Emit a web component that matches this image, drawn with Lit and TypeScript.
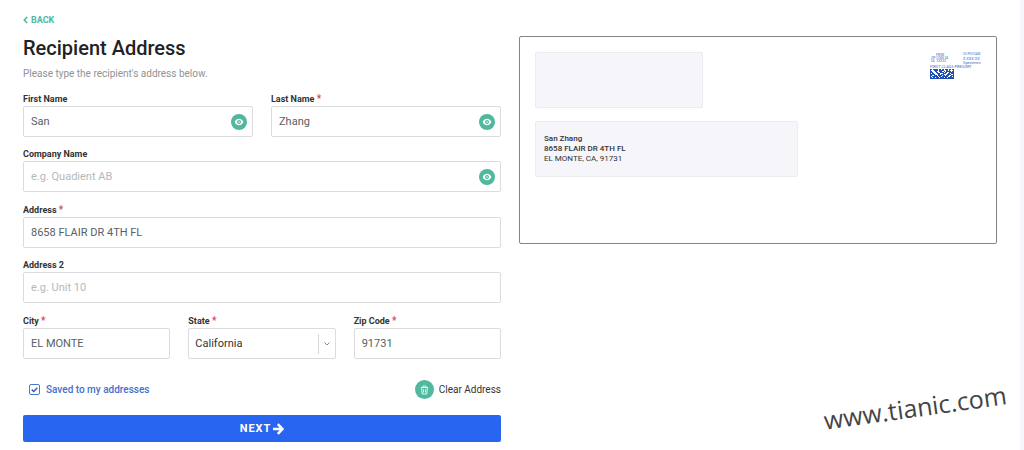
import { LitElement, html, css, svg } from "lit";
import { customElement, property } from "lit/decorators.js";

const eye = html`<svg viewBox="0 0 16 16" width="16" height="16" aria-hidden="true">
  <path fill="#fff" d="M8 4.700C5.900 4.700 4.300 6.100 3.600 8c.7 1.900 2.300 3.300 4.400 3.300s3.700-1.400 4.400-3.300C11.700 6.100 10.100 4.700 8 4.700z"/>
  <circle cx="8" cy="8" r="2" fill="#4fb89d"/>
  <circle cx="8" cy="8" r="1" fill="#fff" opacity=".6"/>
</svg>`;

@customElement("form-field")
class FormField extends LitElement {
  @property() label = "";
  @property() value = "";
  @property() hint = "";
  @property({ type: Boolean }) required = false;
  @property({ type: Boolean }) reveal = false;
  @property({ type: Array }) options: string[] = [];

  static styles = css`
    :host { display: block; min-width: 0; }
    .label {
      display: block;
      font-size: 9px;
      font-weight: 700;
      line-height: 13px;
      color: #333;
    }
    .label.required { line-height: 14px; }
    .star { color: #c9485c; font-weight: 500; font-size: 10px; line-height: 1; }
    .box {
      display: flex;
      align-items: center;
      box-sizing: border-box;
      height: 31px;
      border: 1px solid #dcdcde;
      border-radius: 2px;
      background: #fff;
    }
    .input, .select {
      flex: 1;
      min-width: 0;
      height: 100%;
      box-sizing: border-box;
      border: 0;
      outline: 0;
      background: none;
      font: 400 11px/16px Roboto, sans-serif;
      color: #596066;
      padding: 0 7px;
    }
    .input::placeholder { color: #b5b8bb; opacity: 1; }
    .select { appearance: none; color: #333; padding: 0 6px; }
    .eye {
      display: flex;
      flex: none;
      width: 16px;
      height: 16px;
      margin: 0 5px 0 0;
      padding: 0;
      border: 0;
      border-radius: 50%;
      background: #4fb89d;
    }
    .chevron {
      flex: none;
      display: flex;
      align-items: center;
      justify-content: center;
      width: 16px;
      height: 20px;
      border-left: 1px solid #d8d8da;
      pointer-events: none;
    }
  `;

  render() {
    return html`
      <label class="label ${this.required ? "required" : ""}" for="control"
        >${this.label}${this.required ? html` <span class="star">*</span>` : ""}</label>
      <div class="box">
        ${this.options.length
          ? html`<select class="select" id="control">
                ${this.options.map((o) => html`<option>${o}</option>`)}
              </select>
              <span class="chevron"><svg width="8" height="6" viewBox="0 0 8 6"><path d="M1.500 1.500 4 4l2.500-2.500" fill="none" stroke="#8a8d91"/></svg></span>`
          : html`<input class="input" id="control" type="text" .value=${this.value} placeholder=${this.hint} />`}
        ${this.reveal ? html`<button class="eye" type="button" aria-label="Show ${this.label}">${eye}</button>` : ""}
      </div>
    `;
  }
}

const barcode = [
  "110111110110110111011011",
  "100011110111110011010001",
  "110001100111001011111011",
  "111000110011110110011111",
  "101100011100011100110111",
  "111110001101110001111001",
  "110011101111011011100111",
  "101111110110111111001101",
  "110110111011110110111111",
  "111111111111111111111111",
];

@customElement("app-root")
class AppRoot extends LitElement {
  static styles = css`
    :host {
      display: block;
      min-height: 100vh;
      box-sizing: border-box;
      border-right: 4px solid #f5f5fb;
      background: #fff;
      font-family: Roboto, sans-serif;
      color: #333;
      overflow: hidden;
    }
    .page {
      display: grid;
      grid-template-columns: 1fr 1fr;
      gap: 18px;
      padding: 14px 23px 0;
      align-items: start;
    }
    .back {
      display: flex;
      align-items: center;
      width: max-content;
      gap: 3px;
      font-size: 9px;
      line-height: 12px;
      font-weight: 700;
      color: #52b79d;
      text-decoration: none;
    }
    .title {
      margin: 9px 0 0;
      font-size: 20px;
      line-height: 26px;
      font-weight: 500;
      color: #222;
    }
    .lead {
      margin: 6px 0 11px;
      font-size: 10px;
      line-height: 14px;
      color: #909294;
    }
    .rows { display: grid; gap: 11px; }
    .row { display: grid; grid-auto-flow: column; grid-auto-columns: 1fr; gap: 18px; align-items: end; }
    .actions {
      display: flex;
      justify-content: space-between;
      align-items: center;
      margin: 21px 0 16px;
      padding-left: 6px;
    }
    .saved {
      display: flex;
      align-items: center;
      gap: 6px;
      font-size: 10px;
      line-height: 14px;
      font-weight: 500;
      color: #4370cf;
    }
    .check {
      appearance: none;
      width: 11px;
      height: 11px;
      margin: 0;
      border: 1px solid #4b77c9;
      border-radius: 2px;
      background: #fff;
    }
    .tick { display: grid; }
    .tick > * { grid-area: 1 / 1; place-self: center; }
    .tick svg { pointer-events: none; }
    .clear {
      display: flex;
      align-items: center;
      gap: 5px;
      padding: 0;
      border: 0;
      background: none;
      font: 400 10px/14px Roboto, sans-serif;
      color: #333;
    }
    .bin {
      display: flex;
      align-items: center;
      justify-content: center;
      width: 19px;
      height: 19px;
      border-radius: 50%;
      background: #4fb89d;
    }
    .next {
      display: flex;
      align-items: center;
      justify-content: center;
      gap: 2px;
      width: 100%;
      height: 27px;
      padding: 0;
      border: 0;
      border-radius: 2px;
      background: #2866f2;
      color: #fff;
      font: 700 11px/16px Roboto, sans-serif;
      letter-spacing: 1px;
    }
    .envelope {
      display: flex;
      justify-content: space-between;
      align-items: flex-start;
      box-sizing: border-box;
      min-height: 208px;
      margin-top: 22px;
      padding: 15px;
      border: 1px solid #858588;
      border-radius: 2px;
    }
    .blocks { display: grid; gap: 13px; flex: 0 1 263px; }
    .panel {
      box-sizing: border-box;
      min-height: 56px;
      border: 1px solid #ebebf0;
      border-radius: 2px;
      background: #f5f5fa;
    }
    .sender { width: 64%; }
    .recipient { padding: 12px 8px; font-size: 8px; line-height: 10px; font-weight: 500; }
    .city { font-weight: 400; }
    .stamp { flex: none; }
    .watermark {
      position: absolute;
      right: 17px;
      top: 391px;
      font: 400 25px/32px "Open Sans", sans-serif;
      color: #444;
      transform: rotate(-8deg);
    }
  `;

  render() {
    return html`
      <main class="page">
        <form @submit=${(e: Event) => e.preventDefault()}>
          <a class="back" href="#"
            ><svg width="5" height="8" viewBox="0 0 5 8"><path d="M4.200 1 1.300 4l2.900 3" fill="none" stroke="currentColor" stroke-width="1.600"/></svg>BACK</a>
          <h1 class="title">Recipient Address</h1>
          <p class="lead">Please type the recipient's address below.</p>
          <div class="rows">
            <div class="row">
              <form-field label="First Name" value="San" reveal></form-field>
              <form-field label="Last Name" value="Zhang" required reveal></form-field>
            </div>
            <form-field label="Company Name" hint="e.g. Quadient AB" reveal></form-field>
            <form-field label="Address" value="8658 FLAIR DR 4TH FL" required></form-field>
            <form-field label="Address 2" hint="e.g. Unit 10"></form-field>
            <div class="row">
              <form-field label="City" value="EL MONTE" required></form-field>
              <form-field label="State" .options=${["California"]} required></form-field>
              <form-field label="Zip Code" value="91731" required></form-field>
            </div>
          </div>
          <div class="actions">
            <label class="saved">
              <span class="tick">
                <input class="check" type="checkbox" checked />
                <svg width="9" height="9" viewBox="0 0 9 9"><path d="M1.700 4.600 3.700 6.500 7.300 2.700" fill="none" stroke="#315fb8" stroke-width="1.500"/></svg>
              </span>
              Saved to my addresses
            </label>
            <button class="clear" type="button">
              <span class="bin"><svg width="9" height="10" viewBox="0 0 9 10"><path d="M.8 2.500h7.400M3 2.200V1h3v1.200M1.700 3l.4 6h4.800l.4-6M3.500 4.300v3.300M5.500 4.300v3.300" fill="none" stroke="#e8fff8" stroke-width=".9"/></svg></span>
              Clear Address
            </button>
          </div>
          <button class="next" type="submit">
            NEXT
            <svg width="11" height="12" viewBox="0 0 11 12"><path d="M0 6h9.300M4.800 1.200 9.400 6l-4.600 4.800" fill="none" stroke="#fff" stroke-width="2.500"/></svg>
          </button>
        </form>

        <section class="envelope">
          <div class="blocks">
            <div class="panel sender"></div>
            <div class="panel recipient">
              <div>San Zhang</div>
              <div>8658 FLAIR DR 4TH FL</div>
              <div class="city">EL MONTE, CA, 91731</div>
            </div>
          </div>
          <svg class="stamp" width="51" height="28" viewBox="0 0 51 28" font-family="Roboto, sans-serif" font-size="4" fill="#3f6cc0">
            <text x="6" y="4" font-size="3">FROM</text>
            <text x="1" y="7" font-size="3">ZIP CODE 04</text>
            <text x="1" y="10" font-size="3">04&#160;&#160;&#160;XXXXX</text>
            <text x="33" y="3" font-size="3">US POSTAGE</text>
            <text x="33" y="8" font-size="4">$ XXX.XX</text>
            <text x="33" y="12">Specimen</text>
            <text x="0" y="16">FIRST CLASS PRESORT</text>
            ${barcode.map((line, y) =>
              [...line].map((bit, x) => (bit === "1" ? svg`<rect x=${x} y=${y + 17} width="1" height="1" fill="#1f50b5"/>` : "")),
            )}
          </svg>
        </section>
      </main>
      <div class="watermark">www.tianic.com</div>
    `;
  }
}
